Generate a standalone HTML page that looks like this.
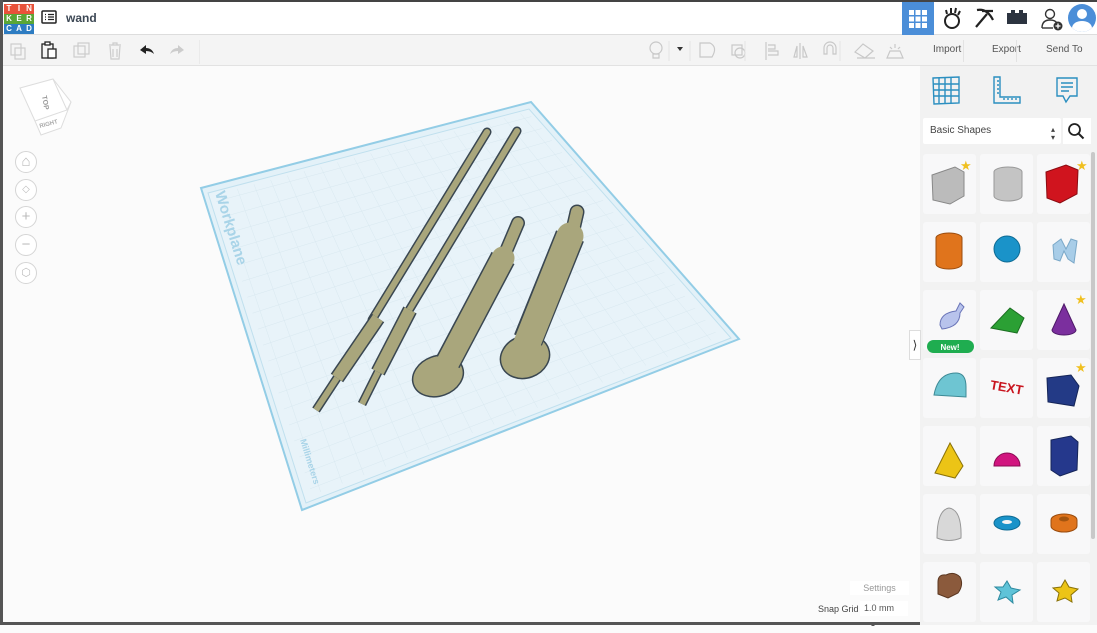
<!DOCTYPE html>
<html><head><meta charset="utf-8"><style>
*{box-sizing:border-box;margin:0;padding:0}
body{width:1097px;height:625px;overflow:hidden;background:#fbfbfb;font-family:"Liberation Sans",sans-serif;position:relative}
.abs{position:absolute}
.top{left:0;top:0;width:1097px;height:35px;background:#fff;border-top:2px solid #444;border-bottom:1px solid #ddd}
.tb{left:0;top:35px;width:1097px;height:31px;background:#f4f4f4;border-bottom:1px solid #e2e2e2}
.lg{width:10px;height:10px;color:#fff;font-size:8px;font-weight:bold;text-align:center;line-height:10px;position:absolute}
.btn{font-size:10px;color:#555;top:44px}
.panel{left:920px;top:66px;width:177px;height:559px;background:#f2f2f2}
.cell{position:absolute;width:53px;height:60px;background:#f8f8f9;border-radius:3px}
.nav{position:absolute;left:15px;width:22px;height:22px;border:1px solid #d5d5d5;border-radius:50%;background:#fff;color:#bbb;font-size:15px;text-align:center;line-height:20px}
</style></head><body>
<div class="abs" style="left:0;top:0;width:3px;height:625px;background:#555;z-index:5"></div>
<div class="abs top"></div>
<div class="lg" style="left:4px;top:4px;background:#e8523a">T</div><div class="lg" style="left:14px;top:4px;background:#e8523a">I</div><div class="lg" style="left:24px;top:4px;background:#e8523a">N</div>
<div class="lg" style="left:4px;top:14px;background:#5aa636">K</div><div class="lg" style="left:14px;top:14px;background:#5aa636">E</div><div class="lg" style="left:24px;top:14px;background:#5aa636">R</div>
<div class="lg" style="left:4px;top:24px;background:#2d7cc2">C</div><div class="lg" style="left:14px;top:24px;background:#2d7cc2">A</div><div class="lg" style="left:24px;top:24px;background:#2d7cc2">D</div>
<svg class="abs" style="left:41px;top:10px" width="16" height="14"><rect x="1" y="1" width="14" height="12" rx="1" fill="none" stroke="#222" stroke-width="1.5"/><path d="M4 4.5h1M7 4.5h6M4 7h1M7 7h6M4 9.5h1M7 9.5h6" stroke="#222" stroke-width="1.3"/></svg>
<div class="abs" style="left:66px;top:11px;font-size:12px;color:#3c4754;font-weight:bold">wand</div>
<div class="abs" style="left:902px;top:2px;width:32px;height:33px;background:#4b8ed8"></div>
<svg class="abs" style="left:909px;top:10px" width="18" height="18"><g fill="#fff"><rect x="0" y="0" width="5" height="5"/><rect x="6.5" y="0" width="5" height="5"/><rect x="13" y="0" width="5" height="5"/><rect x="0" y="6.5" width="5" height="5"/><rect x="6.5" y="6.5" width="5" height="5"/><rect x="13" y="6.5" width="5" height="5"/><rect x="0" y="13" width="5" height="5"/><rect x="6.5" y="13" width="5" height="5"/><rect x="13" y="13" width="5" height="5"/></g></svg>
<svg class="abs" style="left:940px;top:6px" width="24" height="24"><circle cx="12" cy="15" r="7" fill="none" stroke="#222" stroke-width="2"/><path d="M7 8l-1-4M11 7V2M15 7l1-5M18 9l2-4" stroke="#222" stroke-width="2"/></svg>
<svg class="abs" style="left:973px;top:6px" width="24" height="24"><path d="M4 4q10-2 16 10M9 5l11 0M14 8L3 21" stroke="#222" stroke-width="2.2" fill="none"/></svg>
<svg class="abs" style="left:1006px;top:9px" width="22" height="16"><path d="M1 4h4V1h4v3h4V1h4v3h4v11H1z" fill="#2c3440"/></svg>
<svg class="abs" style="left:1040px;top:7px" width="24" height="24"><circle cx="10" cy="7" r="4.5" fill="none" stroke="#333" stroke-width="1.4"/><path d="M2 21q0-8 8-8 5 0 7 3" fill="none" stroke="#333" stroke-width="1.4"/><path d="M2 21h11" stroke="#333" stroke-width="1.4"/><circle cx="18" cy="19" r="4.5" fill="#333"/><path d="M18 16.5v5M15.5 19h5" stroke="#fff" stroke-width="1.3"/></svg>
<div class="abs" style="left:1068px;top:4px;width:28px;height:28px;border-radius:50%;background:#4b8ed8;overflow:hidden"><div class="abs" style="left:9px;top:5px;width:10px;height:10px;border-radius:50%;background:#fff"></div><div class="abs" style="left:4px;top:17px;width:20px;height:14px;border-radius:50% 50% 0 0;background:#fff"></div></div>
<div class="abs tb"></div>
<svg class="abs" style="left:0;top:36px" width="200" height="30"><g fill="none" stroke="#ccc" stroke-width="1.2"><rect x="11" y="8" width="10" height="11"/><rect x="15" y="12" width="10" height="11"/><rect x="74" y="10" width="11" height="11"/><rect x="78" y="7" width="11" height="11"/><path d="M109 9h12M113 9V7h4v2M110 10l1 13h8l1-13M113 13v8M117 13v8"/></g><g fill="none" stroke="#222" stroke-width="1.3"><rect x="42" y="8" width="11" height="14"/><rect x="45" y="6" width="5" height="3" fill="#fff"/><rect x="48" y="13" width="8" height="9" fill="#fff"/></g><path d="M140 14l6-5v3q6 0 8 6q-3-3-8-3v3z" fill="#222"/><path d="M184 14l-6-5v3q-6 0-8 6q3-3 8-3v3z" fill="#ccc"/><path d="M200 4v24" stroke="#e0e0e0"/></svg>
<svg class="abs" style="left:640px;top:36px" width="280" height="30"><g fill="none" stroke="#c8c8c8" stroke-width="1.2"><circle cx="16" cy="12" r="6"/><path d="M13 18h6v4h-6z"/><path d="M60 7h10q8 4 2 14h-12z"/><rect x="92" y="9" width="10" height="10"/><circle cx="100" cy="17" r="5"/><path d="M126 6v18M128 9h7v4h-7M128 15h10v4h-10"/><path d="M160 7v16M157 21l-3 0 3-11zM163 10l4 11h-4z"/><path d="M184 18v-6a6 6 0 0 1 12 0v6h-3v-6a3 3 0 0 0-6 0v6z"/><path d="M215 16l8-8 10 7-8 7zM217 22h18"/><path d="M247 22h16l-3-7h-10zM255 8v4M250 11l2 2M260 11l-2 2"/></g><path d="M37 11h6l-3 4z" fill="#333"/><path d="M29 5v20M50 5v20M105 5v20M200 5v20" stroke="#e3e3e3"/></svg>
<div class="abs btn" style="left:933px">Import</div>
<div class="abs btn" style="left:992px">Export</div>
<div class="abs btn" style="left:1046px">Send To</div>
<div class="abs" style="left:1016px;top:40px;width:1px;height:22px;background:#e3e3e3"></div>
<div class="abs" style="left:963px;top:40px;width:1px;height:22px;background:#e3e3e3"></div>

<svg class="abs" style="left:0;top:66px" width="920" height="559" id="cv">
<g transform="translate(0,-66)">
<polygon points="201,188 531,102 739,339 302,510" fill="#e3f1f8" stroke="#93cde6" stroke-width="2"/>
<polygon points="208,193 529,109 731,338 306,503" fill="#e8f3f9" stroke="#c0e0ee" stroke-width="1"/>
<g id="grid" stroke="#d8e8f0" stroke-width="0.5"></g>
<text x="0" y="0" transform="translate(215,193) rotate(72.6)" font-size="15" font-weight="bold" fill="#a9d4e8" font-family="Liberation Sans">Workplane</text>
<text x="0" y="0" transform="translate(300,440) rotate(72.6)" font-size="9" font-weight="bold" fill="#a9d4e8" font-family="Liberation Sans">Millimeters</text>
<ellipse cx="438" cy="376" rx="26" ry="20" fill="#a9a67c" stroke="#3a4751" stroke-width="1.5" transform="rotate(-20 438 376)"/>
<ellipse cx="525" cy="357" rx="25" ry="21" fill="#a9a67c" stroke="#3a4751" stroke-width="1.5" transform="rotate(-20 525 357)"/>
<g stroke-linecap="round" fill="none">
<path d="M487 132L372 320" stroke="#3a4751" stroke-width="9"/><path d="M487 132L372 320" stroke="#a9a67c" stroke-width="6"/>
<path d="M378 318L337 378" stroke="#3a4751" stroke-width="15" stroke-linecap="butt"/><path d="M378 318L337 378" stroke="#a9a67c" stroke-width="12" stroke-linecap="butt"/>
<path d="M337 378L316 410" stroke="#3a4751" stroke-width="9" stroke-linecap="butt"/><path d="M337 378L316 410" stroke="#a9a67c" stroke-width="6" stroke-linecap="butt"/>
<path d="M517 131L408 312" stroke="#3a4751" stroke-width="9"/><path d="M517 131L408 312" stroke="#a9a67c" stroke-width="6"/>
<path d="M410 310L378 372" stroke="#3a4751" stroke-width="15" stroke-linecap="butt"/><path d="M410 310L378 372" stroke="#a9a67c" stroke-width="12" stroke-linecap="butt"/>
<path d="M378 372L362 404" stroke="#3a4751" stroke-width="9" stroke-linecap="butt"/><path d="M378 372L362 404" stroke="#a9a67c" stroke-width="6" stroke-linecap="butt"/>
<path d="M518 223L504 256" stroke="#3a4751" stroke-width="14"/><path d="M518 223L504 256" stroke="#a9a67c" stroke-width="11"/>
<path d="M503 258L448 362" stroke="#3a4751" stroke-width="26" stroke-linecap="butt"/><path d="M503 258L446 366" stroke="#a9a67c" stroke-width="23"/>
<path d="M577 212L572 234" stroke="#3a4751" stroke-width="15"/><path d="M577 212L572 234" stroke="#a9a67c" stroke-width="12"/>
<path d="M570 236L528 340" stroke="#3a4751" stroke-width="30" stroke-linecap="butt"/><path d="M570 236L526 346" stroke="#a9a67c" stroke-width="27"/>
</g>
</g>
</svg>
<script>
(function(){var A=[201,188],B=[531,102],C=[739,339],D=[302,510],g=document.getElementById('grid'),s='';
function P(u,v){return[(1-u)*(1-v)*A[0]+u*(1-v)*B[0]+u*v*C[0]+(1-u)*v*D[0],(1-u)*(1-v)*A[1]+u*(1-v)*B[1]+u*v*C[1]+(1-u)*v*D[1]];}
var n=20;for(var i=1;i<n;i++){var a=P(i/n,0.03),b=P(i/n,0.97),c=P(0.03,i/n),d=P(0.97,i/n);s+='<line x1="'+a[0]+'" y1="'+a[1]+'" x2="'+b[0]+'" y2="'+b[1]+'"/><line x1="'+c[0]+'" y1="'+c[1]+'" x2="'+d[0]+'" y2="'+d[1]+'"/>';}
g.innerHTML=s;})();
</script>

<svg class="abs" style="left:15px;top:76px" width="60" height="62"><polygon points="5,12 38,3 56,26 46,52 26,59 20,45" fill="#fff" stroke="#ddd"/><path d="M20 45L52 34 38 3M52 34L56 26" fill="none" stroke="#ddd"/><text x="0" y="0" transform="translate(27,20) rotate(80)" font-size="7" fill="#999" font-weight="bold">TOP</text><text x="25" y="52" transform="rotate(-15 25 52)" font-size="6" fill="#aaa" font-weight="bold">RIGHT</text></svg>
<div class="nav" style="top:151px">⌂</div>
<div class="nav" style="top:179px;font-size:10px">◇</div>
<div class="nav" style="top:206px">+</div>
<div class="nav" style="top:234px">−</div>
<div class="nav" style="top:262px;font-size:11px">⬡</div>

<div class="abs" style="left:850px;top:581px;width:59px;height:14px;background:#fff;font-size:9px;color:#999;text-align:center;line-height:14px">Settings</div>
<div class="abs" style="left:818px;top:604px;font-size:9px;color:#444">Snap Grid</div>
<div class="abs" style="left:860px;top:601px;width:48px;height:15px;background:#fff;font-size:9px;color:#555;line-height:15px;padding-left:4px">1.0 mm <span style="font-size:6px;margin-left:6px">▲</span></div>
<div class="abs" style="left:0;top:622px;width:1097px;height:3px;background:#555"></div>

<div class="abs panel"></div>
<div class="abs" style="left:909px;top:330px;width:12px;height:30px;background:#fff;border:1px solid #ddd;font-size:12px;line-height:28px;text-align:center;color:#333">⟩</div>
<svg class="abs" style="left:930px;top:75px" width="150" height="32"><g fill="none" stroke="#2b8fc0" stroke-width="1.4"><path d="M3 3l26-1v26l-25 1z"/><path d="M9 3v25M15 3v25M21 2v26M3 9h26M3 15h26M3 21h26"/><path d="M64 2h6v20h20v6H64z"/><path d="M67 6h2M67 10h2M67 14h2M67 18h2M74 25v-2M78 25v-2M82 25v-2M86 25v-2"/><path d="M127 3h20v18h-7l-4 6-3-6h-6z"/><path d="M131 8h12M131 12h12M131 16h8"/></g></svg>
<div class="abs" style="left:923px;top:118px;width:138px;height:26px;background:#fff;border-radius:2px;font-size:10px;color:#444;line-height:26px;padding-left:7px">Basic Shapes<span style="position:absolute;right:6px;font-size:8px;line-height:8px;top:8px;text-align:center">▴<br>▾</span></div>
<div class="abs" style="left:1063px;top:118px;width:28px;height:26px;background:#fff"></div>
<svg class="abs" style="left:1067px;top:122px" width="18" height="18"><circle cx="7.5" cy="7.5" r="5.5" fill="none" stroke="#222" stroke-width="1.8"/><path d="M11.5 11.5l5 5" stroke="#222" stroke-width="2"/></svg>
<div class="abs" style="left:1091px;top:152px;width:4px;height:387px;background:#c8c8c8;border-radius:2px"></div>

<div class="cell" style="left:923px;top:154px"></div><div class="cell" style="left:980px;top:154px"></div><div class="cell" style="left:1037px;top:154px"></div>
<div class="cell" style="left:923px;top:222px"></div><div class="cell" style="left:980px;top:222px"></div><div class="cell" style="left:1037px;top:222px"></div>
<div class="cell" style="left:923px;top:290px"></div><div class="cell" style="left:980px;top:290px"></div><div class="cell" style="left:1037px;top:290px"></div>
<div class="cell" style="left:923px;top:358px"></div><div class="cell" style="left:980px;top:358px"></div><div class="cell" style="left:1037px;top:358px"></div>
<div class="cell" style="left:923px;top:426px"></div><div class="cell" style="left:980px;top:426px"></div><div class="cell" style="left:1037px;top:426px"></div>
<div class="cell" style="left:923px;top:494px"></div><div class="cell" style="left:980px;top:494px"></div><div class="cell" style="left:1037px;top:494px"></div>
<div class="cell" style="left:923px;top:562px"></div><div class="cell" style="left:980px;top:562px"></div><div class="cell" style="left:1037px;top:562px"></div>

<svg class="abs" style="left:920px;top:150px" width="177" height="475">
<polygon points="12,25 35,17 44,22 44,46 30,54 13,50" fill="#bbb" stroke="#888"/>
<text x="40" y="20" font-size="13" fill="#f0c020">★</text><text x="156" y="20" font-size="13" fill="#f0c020">★</text>
<path d="M74 22a14 5 0 0 1 28 0v24a14 5 0 0 1-28 0z" fill="#c4c4c4" stroke="#999"/>
<polygon points="126,22 146,15 158,20 157,44 140,53 127,48" fill="#d0141e" stroke="#8b0c12"/>
<path d="M16 88a13 5 0 0 1 26 0v26a13 5 0 0 1-26 0z" fill="#e0741c" stroke="#9a4c0e"/>
<circle cx="87" cy="99" r="13" fill="#1a93c9" stroke="#0d6a93"/>
<path d="M133 95l8-6 5 10 5-10 6 2-3 22-6-4-4-8-4 10-6-2z" fill="#a8cde8" stroke="#7aa8c8"/>
<path d="M20 175q0-12 16-14l4-8 4 4-4 6q0 14-18 16z" fill="#b8c3ec" stroke="#6a75b8"/>
<rect x="7" y="190" width="47" height="13" rx="6.5" fill="#1fad50"/><text x="30" y="200" font-size="8" fill="#fff" font-weight="bold" text-anchor="middle">New!</text>
<polygon points="71,178 90,158 104,168 97,183" fill="#2ba034" stroke="#1c6e22"/>
<path d="M132 180l12-26 12 26a12 5 0 0 1-24 0z" fill="#7b2f9e" stroke="#4e1a68"/><text x="155" y="154" font-size="13" fill="#f0c020">★</text>
<path d="M14 245q4-22 22-22 10 0 10 14v10z" fill="#6ec5d2" stroke="#3e8a96"/>
<text x="70" y="242" font-size="13" font-weight="bold" fill="#c9141e" transform="rotate(10 87 238)">TEXT</text>
<polygon points="127,228 151,225 159,236 154,256 128,252" fill="#233a86" stroke="#152558"/><text x="155" y="222" font-size="13" fill="#f0c020">★</text>
<polygon points="15,323 30,293 43,316 35,328" fill="#ecc416" stroke="#8a7208"/>
<path d="M74 316a13 13 0 0 1 26 0z" fill="#d1157f" stroke="#8a0b53"/>
<polygon points="131,290 151,286 158,292 157,320 140,326 131,320" fill="#25388c" stroke="#152558"/>
<path d="M17 388q0-28 12-30 13 2 12 30-12 5-24 0z" fill="#d8d8d8" stroke="#999"/>
<ellipse cx="87" cy="373" rx="13" ry="7" fill="#1a93c9" stroke="#0d6a93"/><ellipse cx="87" cy="372" rx="5" ry="2" fill="#f4f4f4"/>
<path d="M131 370a13 6 0 0 1 26 0v6a13 6 0 0 1-26 0z" fill="#e0741c" stroke="#9a4c0e"/><ellipse cx="144" cy="369" rx="5" ry="2.5" fill="#a35510"/>
<path d="M18 432q0-8 8-7 8-4 14 2 4 8-2 16l-10 5-10-4z" fill="#8b5a3c" stroke="#5a3620"/>
<polygon points="87,431 91,438 100,440 92,445 93,453 86,447 78,450 81,442 75,437 83,437" fill="#5fc3d8" stroke="#2e8aa0"/>
<polygon points="145,430 149,437 158,439 151,445 152,452 145,448 137,451 139,443 133,438 141,437" fill="#ecc416" stroke="#8a7208"/>
</svg>
</body></html>
